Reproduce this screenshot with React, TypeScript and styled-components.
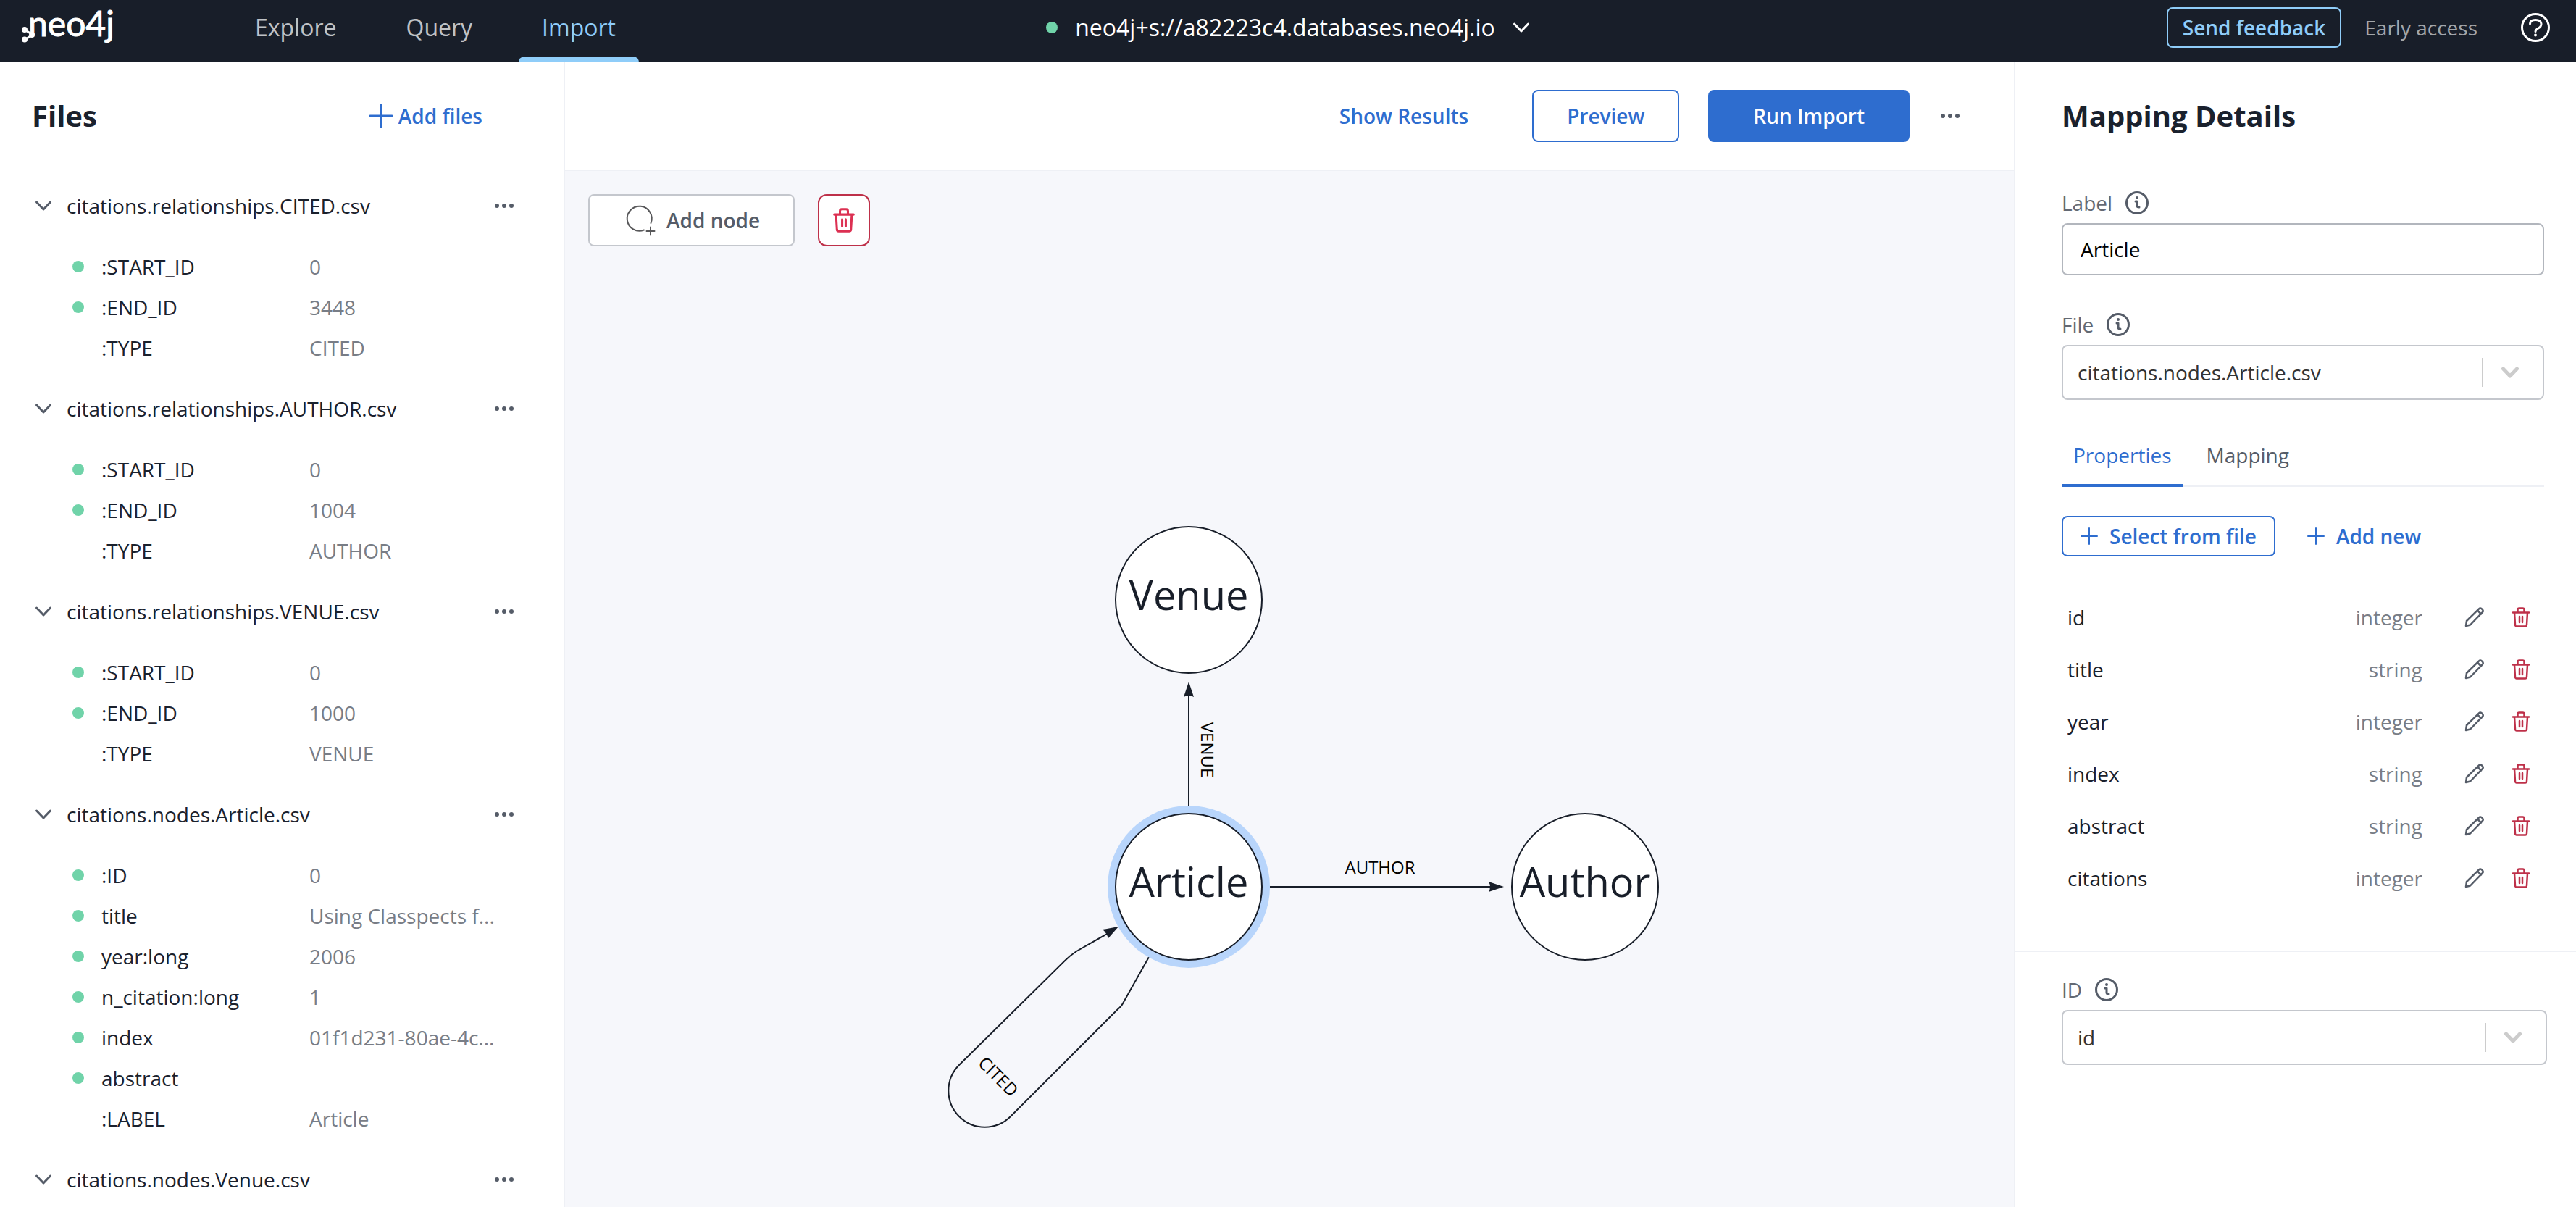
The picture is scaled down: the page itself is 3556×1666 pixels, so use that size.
import React from "react";
import styled, { createGlobalStyle, css } from "styled-components";

const color = {
  ink: "#181e29",
  text: "#1a212d",
  slate: "#555c68",
  muted: "#787d86",
  label: "#636973",
  blue: "#2e6dcf",
  sky: "#8fcdf9",
  ring: "#b8d5fb",
  green: "#70d3a9",
  red: "#be3049",
  line: "#eef0f5",
  field: "#c4c7cd",
  canvas: "#f6f7fb",
};

const GlobalStyle = createGlobalStyle`
  * { box-sizing: border-box; }
  body {
    margin: 0;
    background: #fff;
    color: ${color.text};
    font-family: "Open Sans", "Noto Sans", sans-serif;
    font-size: 28px;
    line-height: 40px;
  }
  button, input, select { font: inherit; color: inherit; margin: 0; }
  button { cursor: pointer; }
  table { border-collapse: collapse; }
`;

const Page = styled.div`
  display: flex;
  flex-direction: column;
  min-height: 100vh;
`;

/* ---------- top bar ---------- */

const TopBar = styled.header`
  display: grid;
  grid-template-columns: 1fr auto 1fr;
  height: 86px;
  background: ${color.ink};
  color: #fff;
`;

const BarStart = styled.div`
  display: flex;
  padding-left: 28px;
`;

const Logo = styled.svg`
  width: 132px;
  height: 76px;
  margin-right: 160px;
`;

const MainNav = styled.nav`
  display: flex;
  gap: 32px;
`;

const NavLink = styled.a<{ $active?: boolean }>`
  position: relative;
  padding: 0 32px;
  font-size: 32px;
  line-height: 76px;
  text-decoration: none;
  color: ${(p) => (p.$active ? color.sky : "#bfc2c6")};
  ${(p) =>
    p.$active &&
    css`
      &::after {
        content: "";
        position: absolute;
        left: 0;
        right: 0;
        bottom: 0;
        height: 8px;
        border-radius: 8px 8px 0 0;
        background: ${color.sky};
      }
    `}
`;

const Connection = styled.button`
  display: flex;
  align-items: center;
  gap: 24px;
  height: 76px;
  padding: 0;
  border: 0;
  background: none;
  font-size: 32px;
`;

const Dot = styled.span`
  display: block;
  width: 16px;
  height: 16px;
  border-radius: 50%;
  background: ${color.green};
`;

const BarEnd = styled.div`
  display: flex;
  justify-content: flex-end;
  align-items: center;
  height: 76px;
  padding-right: 36px;
`;

const FeedbackButton = styled.button`
  height: 56px;
  padding: 0 20px;
  border: 2px solid ${color.sky};
  border-radius: 8px;
  background: none;
  color: ${color.sky};
  font-weight: 600;
`;

const Early = styled.span`
  margin: 0 60px 0 32px;
  color: #a3a6aa;
`;

const IconButton = styled.button<{ $tone?: string; $size?: number }>`
  display: inline-flex;
  align-items: center;
  justify-content: center;
  width: ${(p) => p.$size ?? 48}px;
  height: ${(p) => p.$size ?? 48}px;
  padding: 0;
  border: 0;
  background: none;
  color: ${(p) => p.$tone ?? color.slate};
`;

/* ---------- shell ---------- */

const Body = styled.div`
  display: flex;
  flex: 1;
`;

const PanelTitle = styled.h2`
  margin: 0;
  font-size: 40px;
  line-height: 48px;
  font-weight: 700;
`;

/* ---------- files ---------- */

const FilesPanel = styled.aside`
  flex: 0 0 780px;
  padding: 50px 58px 0 44px;
  border-right: 2px solid ${color.line};
`;

const FilesHead = styled.div`
  display: flex;
  justify-content: space-between;
  align-items: center;
  padding-right: 54px;
  margin-bottom: 72px;
`;

const TextButton = styled.button<{ $gap?: number }>`
  display: inline-flex;
  align-items: center;
  gap: ${(p) => p.$gap ?? 16}px;
  padding: 0;
  border: 0;
  background: none;
  color: ${color.blue};
  font-weight: 600;
`;

const FileGroup = styled.section`
  & + & {
    margin-top: 28px;
  }
`;

const FileHead = styled.div`
  display: flex;
  align-items: center;
  height: 56px;
`;

const FileName = styled.h3`
  flex: 1;
  margin: 0 0 0 16px;
  font-size: 28px;
  line-height: 40px;
  font-weight: 500;
`;

const FieldTable = styled.table`
  width: calc(100% - 56px);
  margin: 28px 0 0 56px;
  table-layout: fixed;
`;

const FieldRow = styled.tr`
  height: 56px;
`;

const FieldCell = styled.td<{ $width?: number; $muted?: boolean }>`
  width: ${(p) => (p.$width ? `${p.$width}px` : "auto")};
  padding: 0;
  white-space: nowrap;
  color: ${(p) => (p.$muted ? color.muted : color.text)};
`;

/* ---------- model ---------- */

const Main = styled.main`
  display: flex;
  flex: 1;
  flex-direction: column;
  min-width: 0;
`;

const ActionBar = styled.div`
  display: flex;
  justify-content: flex-end;
  align-items: center;
  gap: 40px;
  height: 150px;
  padding-right: 72px;
  border-bottom: 2px solid ${color.line};
`;

const ActionButton = styled.button<{ $kind: "plain" | "outline" | "solid" }>`
  height: 72px;
  padding: 0 ${(p) => (p.$kind === "solid" ? 60 : 46)}px;
  border: 2px solid ${(p) => (p.$kind === "plain" ? "transparent" : color.blue)};
  border-radius: 8px;
  background: ${(p) => (p.$kind === "solid" ? color.blue : "#fff")};
  color: ${(p) => (p.$kind === "solid" ? "#fff" : color.blue)};
  font-weight: 600;
`;

const Canvas = styled.div`
  position: relative;
  flex: 1;
  padding: 32px;
  background: ${color.canvas};
`;

const Diagram = styled.svg`
  position: absolute;
  inset: 0;
  width: 100%;
  height: 100%;
`;

const Tools = styled.div`
  position: relative;
  display: flex;
  gap: 32px;
`;

const AddNodeButton = styled.button`
  display: flex;
  align-items: center;
  gap: 12px;
  height: 72px;
  padding: 0 46px;
  border: 2px solid ${color.field};
  border-radius: 8px;
  background: #fff;
  color: ${color.slate};
  font-weight: 600;
`;

const DeleteButton = styled.button`
  display: flex;
  align-items: center;
  justify-content: center;
  width: 72px;
  height: 72px;
  padding: 0;
  border: 2px solid ${color.red};
  border-radius: 12px;
  background: #fff;
  color: #dc3052;
`;

/* ---------- details ---------- */

const DetailsPanel = styled.aside`
  flex: 0 0 776px;
  padding-top: 50px;
  border-left: 2px solid ${color.line};
`;

const DetailsSection = styled.section`
  padding: 0 44px 64px 64px;
`;

const IdSection = styled.section`
  padding: 36px 40px 36px 64px;
  border-top: 2px solid ${color.line};
`;

const Field = styled.div<{ $space?: number }>`
  margin-top: ${(p) => p.$space ?? 0}px;
`;

const FieldLabel = styled.div`
  display: flex;
  align-items: center;
  gap: 18px;
  height: 32px;
  margin-bottom: 12px;
  color: ${color.label};
`;

const TextInput = styled.input`
  display: block;
  width: 100%;
  height: 72px;
  padding: 0 24px;
  border: 2px solid #b2b6bd;
  border-radius: 8px;
  background: #fff;
  color: #000;
`;

const SelectBox = styled.div`
  display: grid;
  grid-template-columns: 1fr 84px;
  align-items: center;
  height: 76px;
  border: 2px solid ${color.field};
  border-radius: 8px;
`;

const Select = styled.select`
  grid-area: 1 / 1 / 2 / 3;
  width: 100%;
  height: 72px;
  padding: 0 88px 0 20px;
  border: 0;
  background: none;
  color: #333;
  appearance: none;
`;

const SelectMark = styled.span`
  grid-area: 1 / 2 / 2 / 3;
  display: flex;
  align-items: center;
  justify-content: center;
  height: 40px;
  padding-right: 8px;
  border-left: 2px solid #ccc;
  color: #ccc;
  pointer-events: none;
`;

const Tabs = styled.div`
  display: flex;
  gap: 16px;
  margin: 36px 0 40px;
  border-bottom: 2px solid ${color.line};
`;

const Tab = styled.button<{ $active?: boolean }>`
  height: 84px;
  margin-bottom: -2px;
  padding: 0 16px;
  border: 0;
  border-bottom: 4px solid ${(p) => (p.$active ? color.blue : "transparent")};
  border-radius: 4px 4px 0 0;
  background: none;
  color: ${(p) => (p.$active ? color.blue : color.slate)};
  font-weight: 500;
`;

const PropertyActions = styled.div`
  display: flex;
  align-items: center;
  gap: 44px;
  margin-bottom: 48px;
`;

const SelectFromFile = styled(TextButton)`
  height: 56px;
  padding: 0 24px;
  border: 2px solid ${color.blue};
  border-radius: 8px;
`;

const PropertyTable = styled.table`
  width: 100%;
`;

const PropertyCell = styled.td<{ $type?: boolean }>`
  height: 72px;
  padding: 0 0 0 8px;
  text-align: ${(p) => (p.$type ? "right" : "left")};
  color: ${(p) => (p.$type ? color.muted : color.text)};
`;

const RowActions = styled.td`
  width: 168px;
  padding: 0 8px 0 48px;
  & > div {
    display: flex;
    gap: 16px;
  }
`;

/* ---------- icons ---------- */

const ChevronDown = ({ size = 24, weight = 3 }: { size?: number; weight?: number }) => (
  <svg width={size} height={size} viewBox="0 0 24 24" fill="none" stroke="currentColor" strokeWidth={weight} strokeLinecap="round" strokeLinejoin="round" aria-hidden="true">
    <path d="M2.500 7l9.500 10L21.500 7" />
  </svg>
);

const Ellipsis = () => (
  <svg width="28" height="8" viewBox="0 0 28 8" fill="currentColor" aria-hidden="true">
    <circle cx="4" cy="4" r="3" />
    <circle cx="14" cy="4" r="3" />
    <circle cx="24" cy="4" r="3" />
  </svg>
);

const Plus = ({ size = 24, weight = 2 }: { size?: number; weight?: number }) => (
  <svg width={size} height={size} viewBox={`0 0 ${size} ${size}`} fill="none" stroke="currentColor" strokeWidth={weight} strokeLinecap="round" aria-hidden="true">
    <path d={`M${size / 2} 1V${size - 1}M1 ${size / 2}H${size - 1}`} />
  </svg>
);

const Trash = ({ size = 28 }: { size?: number }) => (
  <svg width={size} height={size} viewBox="0 0 28 28" fill="none" stroke="currentColor" strokeWidth="2.500" strokeLinecap="round" strokeLinejoin="round" aria-hidden="true">
    <path d="M3 7.500h22M5 7.500l1 17q.2 2 2 2h12q1.800 0 2-2l1-17M9.500 7V3.500q0-2 2-2h5q2 0 2 2V7M12 13v8M16 13v8" />
  </svg>
);

const Pencil = () => (
  <svg width="28" height="28" viewBox="0 0 28 28" fill="none" stroke="currentColor" strokeWidth="2.500" strokeLinecap="round" strokeLinejoin="round" aria-hidden="true">
    <path d="M2 26l1-7L20 2.400q2-2 4.400.4t.4 4.400L8 24.500zM18 4.500l5 5" />
  </svg>
);

const Info = () => (
  <svg width="32" height="32" viewBox="0 0 32 32" fill="none" stroke={color.slate} strokeWidth="3" strokeLinecap="round" strokeLinejoin="round" aria-hidden="true">
    <circle cx="16" cy="16" r="14.500" />
    <path d="M14 14h2v6q0 2 3 2" />
    <circle cx="16" cy="9" r="1" strokeWidth="2" />
  </svg>
);

const Help = () => (
  <svg width="40" height="40" viewBox="0 0 40 40" fill="none" stroke="#fff" strokeLinecap="round" aria-hidden="true">
    <circle cx="20" cy="20" r="18.500" strokeWidth="3" />
    <path d="M12.500 15q0-5.500 7.500-5.500t8 5.500q0 4-4 6t-4 4.500" strokeWidth="3" />
    <circle cx="20" cy="30.500" r="1" strokeWidth="2" />
  </svg>
);

const NodePlus = () => (
  <svg width="48" height="48" viewBox="0 0 48 48" fill="none" stroke="#58585a" strokeWidth="2" strokeLinecap="round" aria-hidden="true">
    <path d="M29 37.500a17 17 0 1 1 9.500-9.500M38 33.500v11M32.500 39h11" />
  </svg>
);

/* ---------- data ---------- */

type FileField = { name: string; value: string; mapped: boolean };

const relationshipFile = (type: string, end: string) => ({
  name: `citations.relationships.${type}.csv`,
  fields: [
    { name: ":START_ID", value: "0", mapped: true },
    { name: ":END_ID", value: end, mapped: true },
    { name: ":TYPE", value: type, mapped: false },
  ],
});

const files: { name: string; fields: FileField[] }[] = [
  relationshipFile("CITED", "3448"),
  relationshipFile("AUTHOR", "1004"),
  relationshipFile("VENUE", "1000"),
  {
    name: "citations.nodes.Article.csv",
    fields: [
      { name: ":ID", value: "0", mapped: true },
      { name: "title", value: "Using Classpects f...", mapped: true },
      { name: "year:long", value: "2006", mapped: true },
      { name: "n_citation:long", value: "1", mapped: true },
      { name: "index", value: "01f1d231-80ae-4c...", mapped: true },
      { name: "abstract", value: "", mapped: true },
      { name: ":LABEL", value: "Article", mapped: false },
    ],
  },
  { name: "citations.nodes.Venue.csv", fields: [] },
];

const properties = [
  { name: "id", type: "integer" },
  { name: "title", type: "string" },
  { name: "year", type: "integer" },
  { name: "index", type: "string" },
  { name: "abstract", type: "string" },
  { name: "citations", type: "integer" },
];

const nodes = [
  { label: "Venue", x: 861, y: 592, selected: false },
  { label: "Article", x: 861, y: 988, selected: true },
  { label: "Author", x: 1408, y: 988, selected: false },
];

/* ---------- parts ---------- */

const Brand = () => (
  <Logo viewBox="28 0 132 76" role="img" aria-label="neo4j">
    <g fill="#fff" stroke="#fff" strokeWidth="3">
      <path d="M34 41l11 7-11 7" fill="none" />
      <circle cx="34" cy="41" r="2.500" />
      <circle cx="44" cy="48" r="2.500" />
      <circle cx="34" cy="54.500" r="2.500" />
    </g>
    <text x="39" y="50" fill="#fff" stroke="#fff" strokeWidth="1" fontFamily="Lato, sans-serif" fontSize="48">
      neo4j
    </text>
  </Logo>
);

const FileBlock = ({ name, fields }: { name: string; fields: FileField[] }) => (
  <FileGroup>
    <FileHead>
      <IconButton $size={32} aria-label={`Collapse ${name}`}>
        <ChevronDown />
      </IconButton>
      <FileName>{name}</FileName>
      <IconButton aria-label={`Options for ${name}`}>
        <Ellipsis />
      </IconButton>
    </FileHead>
    {fields.length > 0 && (
      <FieldTable>
        <tbody>
          {fields.map((f) => (
            <FieldRow key={f.name}>
              <FieldCell $width={40}>{f.mapped && <Dot />}</FieldCell>
              <FieldCell $width={287}>{f.name}</FieldCell>
              <FieldCell $muted>{f.value}</FieldCell>
            </FieldRow>
          ))}
        </tbody>
      </FieldTable>
    )}
  </FileGroup>
);

const Model = () => (
  <Diagram viewBox="0 0 2000 1430" role="img" aria-label="Graph model">
    <g fill="none" stroke={color.ink} strokeWidth="2">
      <path d="M861 876V722" />
      <path d="M973 988h304" />
      <path d="M806 1085L770 1149Q768 1153 762 1158L615 1305A49 49 0 0 1 544 1234L690 1090Q697 1083 706 1077L750 1052" />
    </g>
    <g fill={color.ink}>
      <path d="M861 705l7 21q-7-4-14 0z" />
      <path d="M1296 988l-21-7q4 7 0 14z" />
      <path d="M764 1043l-22 4q6 5 8 12z" />
    </g>
    {nodes.map((n) => (
      <g key={n.label}>
        {n.selected && <circle cx={n.x} cy={n.y} r="112" fill={color.ring} />}
        <circle cx={n.x} cy={n.y} r="101" fill="#fff" stroke={color.ink} strokeWidth="2" />
        <text x={n.x} y={n.y + 14} textAnchor="middle" fontSize="56" fill={color.ink}>
          {n.label}
        </text>
      </g>
    ))}
    <g fontSize="24" textAnchor="middle" fill="#000">
      <text x="1125" y="970">AUTHOR</text>
      <text transform="translate(878 799) rotate(90)">VENUE</text>
      <text transform="translate(592 1256) rotate(45)">CITED</text>
    </g>
  </Diagram>
);

const Dropdown = ({ id, value }: { id: string; value: string }) => (
  <SelectBox>
    <Select id={id} defaultValue={value}>
      <option value={value}>{value}</option>
    </Select>
    <SelectMark>
      <ChevronDown size={24} weight={5} />
    </SelectMark>
  </SelectBox>
);

export default function App() {
  return (
    <Page>
      <GlobalStyle />
      <TopBar>
        <BarStart>
          <Brand />
          <MainNav>
            <NavLink href="#explore">Explore</NavLink>
            <NavLink href="#query">Query</NavLink>
            <NavLink href="#import" $active aria-current="page">
              Import
            </NavLink>
          </MainNav>
        </BarStart>
        <Connection>
          <Dot />
          neo4j+s://a82223c4.databases.neo4j.io
          <ChevronDown />
        </Connection>
        <BarEnd>
          <FeedbackButton>Send feedback</FeedbackButton>
          <Early>Early access</Early>
          <IconButton $size={40} aria-label="Help">
            <Help />
          </IconButton>
        </BarEnd>
      </TopBar>

      <Body>
        <FilesPanel>
          <FilesHead>
            <PanelTitle>Files</PanelTitle>
            <TextButton $gap={8}>
              <Plus size={32} weight={3} />
              Add files
            </TextButton>
          </FilesHead>
          {files.map((f) => (
            <FileBlock key={f.name} {...f} />
          ))}
        </FilesPanel>

        <Main>
          <ActionBar>
            <ActionButton $kind="plain">Show Results</ActionButton>
            <ActionButton $kind="outline">Preview</ActionButton>
            <ActionButton $kind="solid">Run Import</ActionButton>
            <IconButton $size={32} aria-label="More actions">
              <Ellipsis />
            </IconButton>
          </ActionBar>
          <Canvas>
            <Model />
            <Tools>
              <AddNodeButton>
                <NodePlus />
                Add node
              </AddNodeButton>
              <DeleteButton aria-label="Delete">
                <Trash size={34} />
              </DeleteButton>
            </Tools>
          </Canvas>
        </Main>

        <DetailsPanel>
          <DetailsSection>
            <PanelTitle>Mapping Details</PanelTitle>
            <Field $space={80}>
              <FieldLabel>
                <label htmlFor="label">Label</label>
                <Info />
              </FieldLabel>
              <TextInput id="label" defaultValue="Article" />
            </Field>
            <Field $space={52}>
              <FieldLabel>
                <label htmlFor="file">File</label>
                <Info />
              </FieldLabel>
              <Dropdown id="file" value="citations.nodes.Article.csv" />
            </Field>
            <Tabs role="tablist">
              <Tab role="tab" aria-selected="true" $active>
                Properties
              </Tab>
              <Tab role="tab" aria-selected="false">
                Mapping
              </Tab>
            </Tabs>
            <PropertyActions>
              <SelectFromFile>
                <Plus />
                Select from file
              </SelectFromFile>
              <TextButton>
                <Plus />
                Add new
              </TextButton>
            </PropertyActions>
            <PropertyTable>
              <tbody>
                {properties.map((p) => (
                  <tr key={p.name}>
                    <PropertyCell>{p.name}</PropertyCell>
                    <PropertyCell $type>{p.type}</PropertyCell>
                    <RowActions>
                      <div>
                        <IconButton aria-label={`Edit ${p.name}`}>
                          <Pencil />
                        </IconButton>
                        <IconButton $tone={color.red} aria-label={`Delete ${p.name}`}>
                          <Trash />
                        </IconButton>
                      </div>
                    </RowActions>
                  </tr>
                ))}
              </tbody>
            </PropertyTable>
          </DetailsSection>
          <IdSection>
            <FieldLabel>
              <label htmlFor="node-id">ID</label>
              <Info />
            </FieldLabel>
            <Dropdown id="node-id" value="id" />
          </IdSection>
        </DetailsPanel>
      </Body>
    </Page>
  );
}
